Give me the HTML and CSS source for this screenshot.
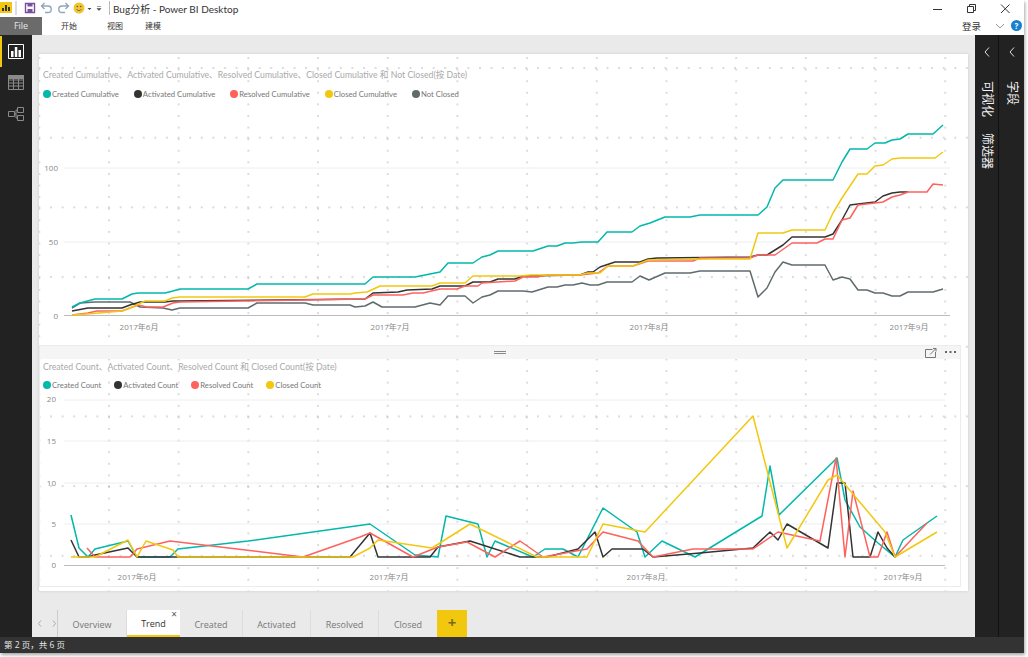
FILE: index.html
```html
<!DOCTYPE html>
<html lang="zh-CN">
<head>
  <meta charset="UTF-8" />
  <title>Bug分析 - Power BI Desktop</title>
  <link rel="stylesheet" href="styles.css">
</head>
<body>
  <div class="window">
    <div class="titlebar">
      <svg class="qat" width="112" height="16" viewBox="0 0 112 16">
        <rect x="0" y="2" width="12" height="11" fill="#f2c80f"/>
        <path d="M2 11V8h2v3zM5 11V5h2v6zM8 11V7h2v4z" fill="#333"/>
        <path d="M16 1v14" stroke="#bbb"/>
        <path d="M25.5 3.5h9v9h-9z" fill="#fff" stroke="#7a4f9e" stroke-width="1.4"/>
        <path d="M27.5 3.5h5v3h-5zM27.5 9h5v3.5h-5z" fill="#7a4f9e"/>
        <path d="M42 6h6a3.2 3.2 0 0 1 0 6.5h-3M44.5 3 41.5 6l3 3" fill="none" stroke="#8fa6bd" stroke-width="1.4"/>
        <path d="M68 6h-6a3.2 3.2 0 0 0 0 6.5h3M65.500 3l3 3-3 3" fill="none" stroke="#8fa6bd" stroke-width="1.4"/>
        <circle cx="79" cy="8" r="5.500" fill="#f2c530"/>
        <path d="M76.500 9.500q2.500 2.500 5 0" fill="none" stroke="#665" stroke-width=".9"/>
        <circle cx="77.300" cy="6.500" r=".8" fill="#554"/><circle cx="80.700" cy="6.500" r=".8" fill="#554"/>
        <path d="M87.500 8h4l-2 2z" fill="#444"/>
        <path d="M97 6.500h4M97 8.500h4l-2 2z" fill="#444" stroke="#444" stroke-width=".5"/>
        <path d="M109.500 1v14" stroke="#bbb"/>
      </svg>
      <span class="app-title">Bug分析 - Power BI Desktop</span>
      <div class="win-controls">
        <svg width="84" height="16" viewBox="0 0 84 16">
          <path d="M0 8.500h9" stroke="#333"/>
          <path d="M34.500 5.500h6v6h-6zM36.500 5.500v-2h6v6h-2" fill="none" stroke="#333"/>
          <path d="M68 3.500l8.500 8.500M76.500 3.500 68 12" stroke="#333"/>
        </svg>
      </div>
    </div>

    <div class="ribbon">
      <div class="file-tab">File</div>
      <nav class="ribbon-tabs">
        <span>开始</span>
        <span>视图</span>
        <span>建模</span>
      </nav>
      <div class="ribbon-right">
        <span>登录</span>
        <svg class="ribbon-chevron" width="10" height="6" viewBox="0 0 10 6"><path d="M1 1l4 4 4-4" fill="none" stroke="#999"/></svg>
        <span class="help">?</span>
      </div>
    </div>

    <div class="main">
      <aside class="rail">
        <div class="rail-item active">
          <svg width="16" height="15" viewBox="0 0 16 15">
            <path d="M.5.500h15v14H.5z" fill="none" stroke="#fff"/>
            <path d="M3 13V7h2.500v6zM6.800 13V3h2.500v10zM10.500 13V6H13v7z" fill="#fff"/>
          </svg>
        </div>
        <div class="rail-item">
          <svg width="16" height="15" viewBox="0 0 16 15">
            <path d="M.5.500h15v14H.5zM.5 5h15M.5 8h15M.5 11h15M5.500 4v11M10.500 4v11" fill="none" stroke="#8a8a8a"/>
            <path d="M0 0h16v4H0z" fill="#8a8a8a"/>
          </svg>
        </div>
        <div class="rail-item">
          <svg width="16" height="15" viewBox="0 0 16 15">
            <path d="M.5 5.500h6v5h-6zM9.500 1.500h6v5h-6zM9.500 9.500h6v5h-6zM6.500 8h1.500V4h1.500M8 8v4h1.500" fill="none" stroke="#8a8a8a"/>
          </svg>
        </div>
      </aside>

      <section class="canvas">
        <div class="page">
          <div class="chart chart-top">
            <h2 class="chart-title">Created Cumulative、Activated Cumulative、Resolved Cumulative、Closed Cumulative 和 Not Closed(按 Date)</h2>
            <ul class="legend">
              <li><i class="dot teal"></i>Created Cumulative</li>
              <li><i class="dot black"></i>Activated Cumulative</li>
              <li><i class="dot red"></i>Resolved Cumulative</li>
              <li><i class="dot yellow"></i>Closed Cumulative</li>
              <li><i class="dot grey"></i>Not Closed</li>
            </ul>
            <svg class="plot" width="929" height="245" viewBox="39 100 929 245">
              <path class="grid" d="M64 168H950M64 242H950"/>
              <path class="axis" d="M64 315.500H950"/>
              <text class="tick" x="58" y="171" text-anchor="end">100</text>
              <text class="tick" x="58" y="245" text-anchor="end">50</text>
              <text class="tick" x="58" y="319" text-anchor="end">0</text>
              <text class="tick" x="139" y="330" text-anchor="middle">2017年6月</text>
              <text class="tick" x="390" y="330" text-anchor="middle">2017年7月</text>
              <text class="tick" x="649" y="330" text-anchor="middle">2017年8月</text>
              <text class="tick" x="909" y="330" text-anchor="middle">2017年9月</text>

              <polyline class="line grey-l" points="72,308 80,303 95,302 130,302 140,307 163,308 172,310 180,308 248,308 257,303 305,303 313,305 350,305 355,307 365,306 373,302 382,307 415,307 430,303 440,305 448,296 465,296 473,303 482,297 490,295 498,291 523,291 532,292 548,287 557,287 565,285 573,285 582,283 590,285 598,285 607,282 632,282 640,276 649,280 665,273 690,273 700,271 750,271 758,297 767,288 775,272 783,262 792,265 825,265 833,280 842,277 850,279 858,290 867,290 875,293 883,293 892,296 900,296 908,292 933,292 943,289"/>
              <polyline class="line teal-l" points="72,307 80,303 95,299 122,299 132,294 138,293 165,293 173,291 180,289 248,289 257,284 365,284 373,277 415,277 440,272 448,263 473,263 482,257 490,255 498,251 533,251 542,248 548,246 557,246 565,243 573,243 582,242 598,242 607,232 632,232 640,226 650,223 665,217 690,217 700,215 758,215 767,207 775,188 783,180 833,180 842,162 850,149 867,149 875,143 885,143 892,140 900,139 908,134 933,134 943,125"/>
              <polyline class="line black-l" points="72,311 88,308 122,308 130,305 140,302 165,302 173,301 180,301 365,299 373,293 398,292 407,290 432,289 440,286 465,286 473,282 490,282 498,279 515,279 523,276 580,275 588,272 593,272 600,267 615,262 640,262 648,259 657,258 750,257 758,255 767,255 775,250 783,245 792,237 825,237 833,234 842,220 850,205 858,204 875,202 883,196 892,193 900,192 908,192"/>
              <polyline class="line red-l" points="72,315 88,313 97,311 122,311 130,308 138,305 147,307 163,307 173,303 180,302 365,299 373,295 403,295 413,293 423,293 440,289 457,289 465,286 478,286 482,283 497,282 515,281 523,277 537,277 547,275 580,275 598,273 608,266 633,266 648,261 693,261 700,258 750,258 758,255 775,255 792,243 817,243 825,239 833,239 842,220 850,218 858,205 875,203 883,202 892,197 900,195 908,192 927,192 933,184 943,185"/>
              <polyline class="line yellow-l" points="72,315 87,314 122,311 130,308 145,301 165,301 172,298 180,297 305,297 313,294 350,294 355,293 367,292 380,286 432,286 440,283 465,283 473,276 520,276 530,275 580,275 587,273 600,273 608,266 633,266 648,260 710,259 750,259 758,233 783,233 792,230 825,230 833,213 842,198 858,174 867,174 875,166 883,165 892,159 900,158 935,158 943,152"/>
            </svg>
          </div>

          <div class="chart chart-bottom">
            <div class="chart-head">
              <svg class="grip" width="12" height="3" viewBox="0 0 12 3"><path d="M0 .5h12M0 2.500h12" stroke="#888"/></svg>
              <div class="chart-tools">
                <svg width="12" height="10" viewBox="0 0 12 10"><path d="M.5 1.500h7M.5 1.500v8h10V4M5 6.500 11 .5M8 .5h3v3" fill="none" stroke="#777"/></svg>
                <svg width="11" height="3" viewBox="0 0 11 3"><path d="M0 0h2v2H0zM4.500 0h2v2h-2zM9 0h2v2H9z" fill="#666"/></svg>
              </div>
            </div>
            <h2 class="chart-title">Created Count、Activated Count、Resolved Count 和 Closed Count(按 Date)</h2>
            <ul class="legend">
              <li><i class="dot teal"></i>Created Count</li>
              <li><i class="dot black"></i>Activated Count</li>
              <li><i class="dot red"></i>Resolved Count</li>
              <li><i class="dot yellow"></i>Closed Count</li>
            </ul>
            <svg class="plot" width="920" height="195" viewBox="40 391 920 195">
              <path class="grid" d="M64 400H945M64 441H945M64 483H945M64 524H945"/>
              <path class="axis" d="M64 565.500H945"/>
              <text class="tick" x="56" y="402" text-anchor="end">20</text>
              <text class="tick" x="56" y="444" text-anchor="end">15</text>
              <text class="tick" x="56" y="486" text-anchor="end">10</text>
              <text class="tick" x="56" y="527" text-anchor="end">5</text>
              <text class="tick" x="56" y="568" text-anchor="end">0</text>
              <text class="tick" x="137" y="580" text-anchor="middle">2017年6月</text>
              <text class="tick" x="389" y="580" text-anchor="middle">2017年7月</text>
              <text class="tick" x="646" y="580" text-anchor="middle">2017年8月</text>
              <text class="tick" x="903" y="580" text-anchor="middle">2017年9月</text>

              <polyline class="line teal-l" points="71,515 79,548 88,557 95,549 128,541 137,557 170,557 178,549 248,541 370,524 415,555 438,557 446,516 478,524 487,557 495,541 533,557 545,549 563,549 578,557 603,508 637,532 645,557 662,541 695,557 762,516 770,466 779,515 837,458 845,500 860,527 878,543 895,557 903,540 937,516"/>
              <polyline class="line black-l" points="71,540 79,557 88,557 95,555 128,548 137,557 350,557 370,533 378,557 430,557 438,547 470,541 520,557 547,557 578,549 595,532 603,557 612,549 643,549 653,557 700,553 753,548 770,532 778,540 787,524 828,548 837,483 845,483 853,557 870,557 878,532 887,548 895,557"/>
              <polyline class="line red-l" points="87,548 95,557 130,557 137,549 170,541 303,557 360,537 370,533 413,557 438,547 467,542 495,557 520,541 543,557 587,549 603,532 638,541 653,557 693,549 753,549 778,532 820,541 836,458 845,557 853,491 870,557 878,557 887,532 895,557 927,523"/>
              <polyline class="line yellow-l" points="71,557 95,557 128,540 137,557 146,541 173,550 178,557 353,557 370,548 378,540 432,548 470,524 537,557 587,557 603,524 645,532 753,416 787,548 828,480 837,475 885,532 895,557 937,532"/>
            </svg>
          </div>
        </div>

        <div class="tabs">
          <div class="tab-nav">
            <svg width="18" height="7" viewBox="0 0 18 7"><path d="M3 .5.500 3.500 3 6.500M15 .5l2.500 3L15 6.500" fill="none" stroke="#aaa"/></svg>
          </div>
          <div class="tab tab-overview">Overview</div>
          <div class="tab tab-trend active">Trend<span class="tab-close">×</span></div>
          <div class="tab tab-created">Created</div>
          <div class="tab tab-activated">Activated</div>
          <div class="tab tab-resolved">Resolved</div>
          <div class="tab tab-closed">Closed</div>
          <div class="tab-add">+</div>
        </div>
      </section>

      <aside class="panes">
        <div class="pane">
          <svg class="pane-chevron" width="6" height="10" viewBox="0 0 6 10"><path d="M5 .5 1 5l4 4.500" fill="none" stroke="#ddd"/></svg>
          <div class="pane-labels">
            <span>可视化</span>
            <span>筛选器</span>
          </div>
        </div>
        <div class="pane">
          <svg class="pane-chevron" width="6" height="10" viewBox="0 0 6 10"><path d="M5 .5 1 5l4 4.500" fill="none" stroke="#ddd"/></svg>
          <div class="pane-labels">
            <span>字段</span>
          </div>
        </div>
      </aside>
    </div>

    <footer class="status">第 2 页，共 6 页</footer>
  </div>
</body>
</html>
```

FILE: styles.css
```css
* {
  margin: 0;
  padding: 0;
  box-sizing: border-box;
}

body {
  width: 1028px;
  height: 657px;
  overflow: hidden;
  background: #fff;
  font-family: "Open Sans", "Noto Sans CJK SC", sans-serif;
  color: #333;
}

.window {
  width: 1024px;
  height: 653px;
  display: flex;
  flex-direction: column;
  box-shadow: 1px 2px 3px rgba(0, 0, 0, 0.35);
}

/* title bar */
.titlebar {
  height: 16px;
  display: flex;
  align-items: center;
  background: #fff;
}

.qat {
  flex: none;
  margin-right: 1px;
}

.app-title {
  font-family: Lato, "Noto Sans CJK SC", sans-serif;
  font-size: 10px;
  color: #333;
}

.win-controls {
  margin-left: auto;
  margin-right: 7px;
  height: 16px;
}

/* ribbon */
.ribbon {
  height: 19px;
  display: flex;
  align-items: center;
  background: #fff;
  font-size: 8px;
}

.file-tab {
  width: 42px;
  height: 18px;
  margin-top: 1px;
  background: #6b6b6b;
  color: #e6e6e6;
  font-size: 9px;
  text-align: center;
  line-height: 18px;
}

.ribbon-tabs {
  display: flex;
  gap: 30px;
  margin-left: 19px;
}

.ribbon-tabs span:last-child {
  margin-left: -8px;
}

.ribbon-right {
  margin-left: auto;
  margin-right: 2px;
  display: flex;
  align-items: center;
  gap: 13px;
  font-size: 9.5px;
}

.ribbon-right .ribbon-chevron {
  margin-left: 1px;
  margin-right: -7px;
}

.help {
  width: 11px;
  height: 11px;
  border-radius: 50%;
  background: #1580cf;
  color: #fff;
  font-size: 8px;
  font-weight: 700;
  line-height: 11px;
  text-align: center;
}

/* main area */
.main {
  flex: 1;
  display: flex;
  min-height: 0;
}

.rail {
  width: 32px;
  background: #222;
  display: flex;
  flex-direction: column;
  padding-top: 1px;
}

.rail-item {
  height: 31px;
  display: flex;
  align-items: center;
  justify-content: center;
  border-left: 2px solid transparent;
  padding-right: 2px;
}

.rail-item.active {
  border-left-color: #f2c80f;
}

.canvas {
  flex: 1;
  display: flex;
  flex-direction: column;
  background: #eaeaea;
  padding: 19px 7px 0;
}

.page {
  height: 537px;
  background-color: #fff;
  background-image:
    radial-gradient(circle, #a8a8a8 0.4px, transparent 0.9px),
    radial-gradient(circle, #a8a8a8 0.4px, transparent 0.9px);
  background-size: 69.7px 11.6px, 11.6px 69.7px;
  background-position: 35.15px -1.8px, -5.4px -20.85px;
  box-shadow: 0 0 3px rgba(0, 0, 0, 0.12);
}

.chart {
  display: flow-root;
}

.chart-top {
  height: 291px;
  padding-top: 14px;
}

.chart-bottom {
  width: 922px;
  height: 242px;
  border: 1px solid #ececec;
}

.chart-head {
  height: 13px;
  background: #f5f5f5;
  display: flex;
  align-items: center;
  justify-content: center;
  position: relative;
}

.chart-tools {
  position: absolute;
  right: 4px;
  top: 1px;
  display: flex;
  align-items: center;
  gap: 8px;
  height: 11px;
}

.chart-title {
  font-family: Lato, "Noto Sans CJK SC", sans-serif;
  font-size: 8.7px;
  font-weight: 400;
  line-height: 14px;
  color: #a9a9a9;
  padding-left: 4px;
  white-space: nowrap;
}

.chart-bottom .chart-title {
  margin-top: 1px;
  padding-left: 3px;
}

.legend {
  list-style: none;
  display: flex;
  gap: 15px;
  margin-top: 6px;
  padding-left: 4px;
  font-family: Lato, "Noto Sans CJK SC", sans-serif;
  font-size: 7.7px;
  line-height: 12px;
  color: #777;
}

.chart-bottom .legend {
  margin-top: 5px;
  padding-left: 3px;
  gap: 13px;
}

.legend li {
  display: flex;
  align-items: center;
  gap: 1px;
  white-space: nowrap;
}

.dot {
  width: 8px;
  height: 8px;
  border-radius: 50%;
}

.teal { background: #01b8aa; }
.black { background: #333; }
.red { background: #fd625e; }
.yellow { background: #f2c80f; }
.grey { background: #5f6b6d; }

.plot {
  display: block;
}

.grid {
  stroke: #eee;
  fill: none;
}

.axis {
  stroke: #bbb;
  fill: none;
}

.tick {
  font-size: 8px;
  fill: #888;
}

.line {
  fill: none;
  stroke-width: 1.5;
  stroke-linejoin: round;
}

.teal-l { stroke: #01b8aa; }
.black-l { stroke: #333; }
.red-l { stroke: #fd625e; }
.yellow-l { stroke: #f2c80f; }
.grey-l { stroke: #5f6b6d; }

/* page tabs */
.tabs {
  height: 27px;
  margin-top: auto;
  display: flex;
  font-size: 9px;
  color: #777;
}

.tab-nav {
  width: 20px;
  border-right: 1px solid #ccc;
  display: flex;
  align-items: center;
  flex: none;
  margin-left: -1px;
}

.tab {
  display: flex;
  align-items: center;
  justify-content: center;
  border-right: 1px solid #ddd;
  padding-top: 2px;
  position: relative;
}

.tab-overview { width: 69px; }
.tab-trend { width: 53px; }
.tab-created { width: 63px; }
.tab-activated { width: 68px; }
.tab-resolved { width: 68px; }
.tab-closed { width: 58px; border-right: none; }

.tab.active {
  background: #fff;
  color: #333;
  border-right: none;
  border-bottom: 2px solid #f2c80f;
}

.tab-close {
  position: absolute;
  top: -1px;
  right: 3px;
  font-size: 10px;
  line-height: 10px;
  color: #555;
}

.tab-add {
  width: 30px;
  background: #f2c80f;
  color: #7a6a20;
  font-size: 15px;
  font-weight: 700;
  line-height: 25px;
  text-align: center;
}

/* side panes */
.panes {
  width: 49px;
  display: flex;
  background: #222;
}

.pane {
  width: 24px;
  display: flex;
  flex-direction: column;
  align-items: center;
  padding-top: 12px;
  border-right: 1px solid #111;
}

.pane + .pane {
  width: 25px;
  border-right: none;
}

.pane-labels {
  margin-top: 24px;
  display: flex;
  flex-direction: column;
  gap: 16px;
}

.pane-labels span {
  writing-mode: vertical-rl;
  text-orientation: sideways;
  color: #f0f0f0;
  font-size: 12px;
  line-height: 14px;
}

/* status bar */
.status {
  height: 16px;
  background: #333;
  color: #e8e8e8;
  font-size: 8.5px;
  line-height: 16px;
  padding-left: 4px;
}
```
